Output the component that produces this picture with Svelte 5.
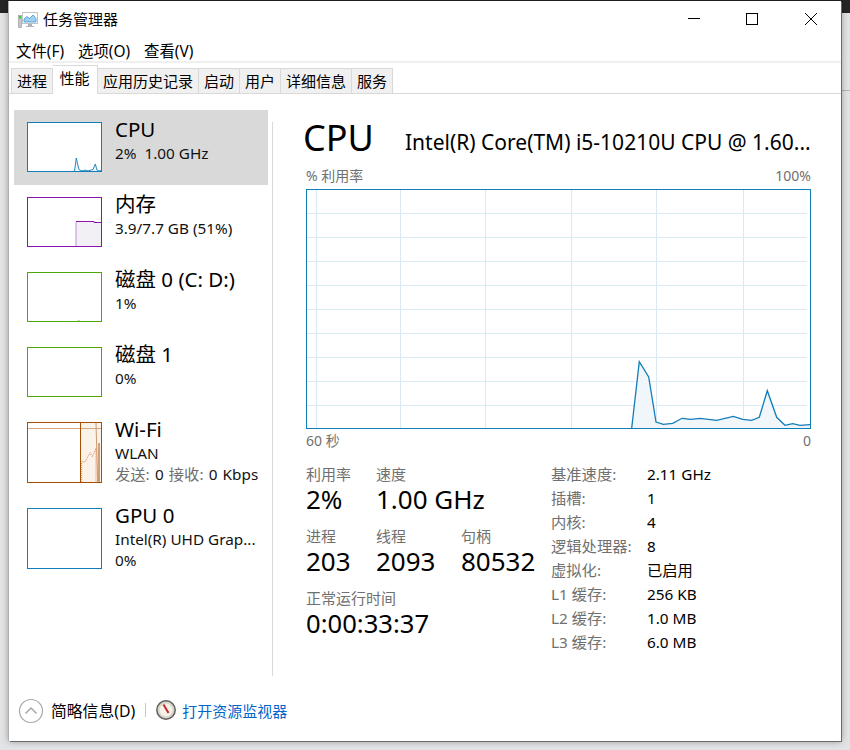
<script>
  const items = [
    { name: "CPU", lines: ["2%  1.00 GHz"], kind: "cpu", color: "#117dbb", selected: true },
    { name: "内存", lines: ["3.9/7.7 GB (51%)"], kind: "mem", color: "#8b12ae" },
    { name: "磁盘 0 (C: D:)", lines: ["1%"], kind: "disk", color: "#4da60c" },
    { name: "磁盘 1", lines: ["0%"], kind: "none", color: "#4da60c" },
    { name: "Wi-Fi", lines: ["WLAN"], rate: true, kind: "wifi", color: "#a74f01", tall: true },
    { name: "GPU 0", lines: ["Intel(R) UHD Grap...", "0%"], kind: "none", color: "#117dbb", tall: true },
  ];
  const tabs = ["进程", "性能", "应用历史记录", "启动", "用户", "详细信息", "服务"];
  const specs = [
    ["基准速度:", "2.11 GHz"],
    ["插槽:", "1"],
    ["内核:", "4"],
    ["逻辑处理器:", "8"],
    ["虚拟化:", "已启用"],
    ["L1 缓存:", "256 KB"],
    ["L2 缓存:", "1.0 MB"],
    ["L3 缓存:", "6.0 MB"],
  ];
  const cpuLine =
    "324.7,238 332.3,171.7 341.7,187 349,232 356.3,234.3 365.7,233.3 375,228.3 383.7,229.3 393,228.3 409.7,230.3 426.3,226.3 435.7,229.3 444.7,230.3 452.3,227.3 460.3,200.7 469.7,227.3 478,235.3 485.7,233.7 493,235.3 503,234.7";
  const vgrid = [9, 93, 178, 264, 349, 436];
  const hgrid = [23, 47, 71, 95, 119, 143, 167, 191, 215];
</script>

<div class="desk">
  <div class="window">
    <header class="title">
      <svg class="app-icon" width="20" height="16" viewBox="0 0 20 16">
        <rect x="4.5" y="0.5" width="15" height="11" fill="#fff" stroke="#bfc3c7" />
        <path d="M6 9V7l3-2.5 2.5 2L15 3l3 3.5V10H6z" fill="#9fd0ef" stroke="#3f98d8" stroke-width="0.8" />
        <rect x="0.5" y="3.5" width="3" height="12" fill="#c4c8cb" stroke="#8f9498" stroke-width="0.6" />
        <rect x="1" y="4" width="2" height="2.5" fill="#45c83c" />
        <path d="M10 12h4v2h2v1H8v-1h2z" fill="#b0b4b8" />
      </svg>
      <span class="title-text">任务管理器</span>
      <div class="controls">
        <svg width="12" height="12" viewBox="0 0 12 12"><path d="M0 5.5h12" stroke="#000" fill="none" /></svg>
        <svg width="12" height="12" viewBox="0 0 12 12"><rect x="0.5" y="0.5" width="11" height="11" stroke="#000" fill="none" /></svg>
        <svg width="12" height="12" viewBox="0 0 12 12"><path d="M0 0l12 12M12 0L0 12" stroke="#000" fill="none" /></svg>
      </div>
    </header>

    <nav class="menu">
      <span>文件(F)</span>
      <span>选项(O)</span>
      <span>查看(V)</span>
    </nav>

    <div class="tabs">
      {#each tabs as tab, i}
        <div class="tab" class:active={i === 1}>{tab}</div>
      {/each}
    </div>

    <main class="body">
      <aside class="side">
        {#each items as item}
          <div class="item" class:selected={item.selected} class:tall={item.tall}>
            <svg class="thumb" viewBox="0 0 73 {item.tall ? 59 : 48}" style="border-color: {item.color}">
              {#if item.kind === "cpu"}
                <path
                  d="M46.5 48L48.3 35 50.5 45 51.5 47 54 48 57 47 60 48 63 47 65 46.5 67.3 41 69 47 71 48 73 47.5"
                  fill="#f1f6fa"
                  stroke="#117dbb"
                  stroke-width="0.9"
                />
              {:else if item.kind === "mem"}
                <path d="M48 48V24H66V25H73V48Z" fill="#f3f0f5" />
                <path d="M48 48V24" stroke="#c48fd6" fill="none" />
                <path d="M48 23.5H66V24.5H73" stroke="#8b12ae" fill="none" />
              {:else if item.kind === "disk"}
                <path d="M50 47.5h1.5" stroke="#9ccb78" />
              {:else if item.kind === "wifi"}
                <rect x="52" y="0" width="21" height="59" fill="#fbf2ea" />
                <path d="M0 5.5H73" stroke="#d3a680" />
                <path d="M52.5 0V59" stroke="#a74f01" />
                <path d="M68 0L69.7 59" stroke="#c89a72" />
                <path d="M53.7 59V38.7L57 39 62 29.7 64.3 33.7 68 25.3V59" fill="none" stroke="#e0845a" stroke-dasharray="1 1" />
                <path d="M71 20V59" stroke="#a74f01" />
              {/if}
            </svg>
            <div class="info">
              <div class="name">{item.name}</div>
              {#each item.lines as line}
                <div class="sub">{line}</div>
              {/each}
              {#if item.rate}
                <div class="sub rate"><span class="muted">发送:</span> 0 <span class="muted">接收:</span> 0 Kbps</div>
              {/if}
            </div>
          </div>
        {/each}
      </aside>

      <section class="detail">
        <div class="heading">
          <h1>CPU</h1>
          <div class="model">Intel(R) Core(TM) i5-10210U CPU @ 1.60...</div>
        </div>
        <div class="axis top"><span>% 利用率</span><span>100%</span></div>
        <svg class="graph" viewBox="0 0 503 238">
          {#each vgrid as x}
            <path d="M{x + 0.5} 0V238" stroke="#d9eaf4" />
          {/each}
          {#each hgrid as y}
            <path d="M0 {y + 0.5}H500" stroke="#d9eaf4" />
          {/each}
          <polygon points="{cpuLine} 503,238" fill="#f1f6fa" />
          <polyline points={cpuLine} fill="none" stroke="#117dbb" stroke-width="1.3" />
        </svg>
        <div class="axis bottom"><span>60 秒</span><span>0</span></div>

        <div class="stats">
          <div class="live">
            <div class="stat w70"><span class="label">利用率</span><b>2%</b></div>
            <div class="stat"><span class="label">速度</span><b>1.00 GHz</b></div>
            <div class="break"></div>
            <div class="stat w70"><span class="label">进程</span><b>203</b></div>
            <div class="stat w85"><span class="label">线程</span><b>2093</b></div>
            <div class="stat"><span class="label">句柄</span><b>80532</b></div>
            <div class="break"></div>
            <div class="stat"><span class="label">正常运行时间</span><b class="uptime">0:00:33:37</b></div>
          </div>
          <dl class="specs">
            {#each specs as [key, value]}
              <dt>{key}</dt>
              <dd>{value}</dd>
            {/each}
          </dl>
        </div>
      </section>
    </main>

    <footer class="foot">
      <span class="chevron">
        <svg width="26" height="26" viewBox="0 0 26 26">
          <circle cx="13" cy="13" r="11.5" fill="none" stroke="#a8a8a8" stroke-width="1.2" />
          <path d="M7.5 15.5L13 10l5.5 5.5" fill="none" stroke="#a8a8a8" stroke-width="1.5" />
        </svg>
      </span>
      <span class="brief">简略信息(D)</span>
      <span class="sep"></span>
      <svg class="gauge" width="20" height="20" viewBox="0 0 20 20">
        <circle cx="10" cy="10" r="9.2" fill="#d8d4c8" stroke="#5f5f5f" stroke-width="1.5" />
        <circle cx="10" cy="10" r="6.5" fill="#f6f2e8" />
        <path d="M7.5 4.5L12.5 13" stroke="#c2272d" stroke-width="2" />
      </svg>
      <span class="link">打开资源监视器</span>
    </footer>
  </div>
</div>

<style>
  :global(body) {
    margin: 0;
    background: #e2e3e4;
  }

  .desk {
    height: 750px;
    padding: 1px 9px 0;
    box-sizing: border-box;
    overflow: hidden;
    background:
      linear-gradient(#b4b4b4, #b4b4b4) right 0 top 90px / 8px 1px no-repeat,
      linear-gradient(#262626 13px, #e2e3e4 13px);
    font-family: "Noto Sans", "Noto Sans CJK SC", sans-serif;
    color: #000;
  }

  .window {
    height: 740px;
    width: 832px;
    background: #fff;
    box-sizing: border-box;
    display: flex;
    flex-direction: column;
    box-shadow:
      1px 1px 0 #6b6b6b,
      -1px 0 0 #b0b0b0,
      0 0 7px rgba(0, 0, 0, 0.4);
  }

  .title {
    height: 36px;
    flex: none;
    display: flex;
    align-items: center;
    padding-left: 9px;
  }

  .app-icon {
    margin-right: 5px;
    margin-top: 1px;
  }

  .title-text {
    font-size: 15px;
    margin-top: -2px;
  }

  .controls {
    margin-left: auto;
    display: flex;
    gap: 47px;
    padding-right: 24px;
  }

  .controls svg:first-child {
    margin-right: -1px;
  }

  .menu {
    height: 24px;
    flex: none;
    display: flex;
    align-items: center;
    gap: 14px;
    padding: 6px 0 0 7px;
    box-sizing: border-box;
    font-size: 15.4px;
    line-height: 1;
  }

  .tabs {
    height: 33px;
    flex: none;
    display: flex;
    align-items: flex-end;
    box-sizing: border-box;
    padding-left: 2px;
    border-top: 2px solid #f0f0f0;
    border-bottom: 1px solid #d9d9d9;
  }

  .tab {
    height: 24px;
    margin-bottom: -1px;
    padding: 0 5px;
    border: 1px solid #d9d9d9;
    border-left-width: 0;
    background: #f0f0f0;
    font-size: 15px;
    line-height: 24px;
  }

  .tab:first-child {
    border-left-width: 1px;
  }

  .tab.active {
    height: 27px;
    padding: 0 7.5px 0 6.5px;
    background: #fff;
    border-bottom-color: #fff;
  }

  .body {
    flex: 1;
    display: flex;
    min-height: 0;
  }

  .side {
    width: 259px;
    flex: none;
    box-sizing: border-box;
    margin: 16px 0 0 5px;
    height: 566px;
    background: linear-gradient(#d9d9d9, #d9d9d9) right 12px / 1px 100% no-repeat;
  }

  .item {
    height: 75px;
    width: 254px;
    display: flex;
    padding: 12px 0 0 13px;
    box-sizing: border-box;
  }

  .item.tall {
    height: 86px;
  }

  .item.selected {
    background: #d9d9d9;
  }

  .thumb {
    width: 75px;
    height: 50px;
    flex: none;
    box-sizing: border-box;
    border: 1px solid;
    background: #fff;
    margin-right: 13px;
  }

  .tall .thumb {
    height: 61px;
  }

  .info {
    white-space: nowrap;
    margin-top: -6px;
  }

  .name {
    font-size: 20.5px;
    line-height: 26px;
    margin-bottom: 1px;
  }

  .sub {
    font-size: 15.3px;
    line-height: 21px;
    color: #111;
    white-space: pre;
  }

  .rate {
    word-spacing: 1.2px;
  }

  .muted {
    color: #707070;
  }

  .detail {
    flex: 1;
    padding: 21px 30px 0 33px;
    min-width: 0;
    box-sizing: border-box;
  }

  .heading {
    display: flex;
    align-items: center;
    height: 46px;
    white-space: nowrap;
  }

  h1 {
    margin: 0 0 0 -3px;
    font-weight: 400;
    font-size: 36px;
    line-height: 46px;
    width: 102px;
    flex: none;
  }

  .model {
    font-size: 21px;
    margin-top: 8px;
  }

  .axis {
    display: flex;
    justify-content: space-between;
    font-size: 14px;
    color: #707070;
    line-height: 18px;
    width: 505px;
    height: 20px;
  }

  .axis.top {
    padding-top: 6px;
    height: 22px;
  }

  .axis.bottom {
    margin-top: 3px;
  }

  .graph {
    display: block;
    width: 505px;
    height: 240px;
    border: 1px solid #117dbb;
    box-sizing: border-box;
  }

  .stats {
    display: flex;
    margin-top: 12px;
  }

  .live {
    width: 245px;
    display: flex;
    flex-wrap: wrap;
    align-content: flex-start;
  }

  .break {
    flex-basis: 100%;
    height: 0;
  }

  .stat {
    margin-bottom: 11px;
    white-space: nowrap;
  }

  .w70 {
    width: 70px;
  }

  .w85 {
    width: 85px;
  }

  .label {
    display: block;
    font-size: 15px;
    line-height: 20px;
    color: #707070;
  }

  .stat b {
    display: block;
    font-weight: 400;
    font-size: 26px;
    line-height: 31px;
  }

  .stat b.uptime {
    font-size: 25.6px;
  }

  .specs {
    margin: 0;
    display: grid;
    grid-template-columns: 96px auto;
    grid-auto-rows: 24px;
    font-size: 15.3px;
    line-height: 20px;
    align-content: start;
  }

  .specs dt {
    color: #707070;
  }

  .specs dd {
    margin: 0;
  }

  .foot {
    height: 60px;
    flex: none;
    display: flex;
    align-items: center;
    padding-left: 9px;
  }

  .chevron {
    display: flex;
    margin-right: 7px;
  }

  .brief {
    font-size: 15.8px;
    margin-top: -2px;
  }

  .sep {
    width: 1px;
    height: 14px;
    background: #c8c8c8;
    margin: -2px 10px 0 10px;
  }

  .gauge {
    margin-right: 6px;
    margin-top: -2px;
  }

  .link {
    color: #0066cc;
    font-size: 15px;
    margin-top: -2px;
  }
</style>
